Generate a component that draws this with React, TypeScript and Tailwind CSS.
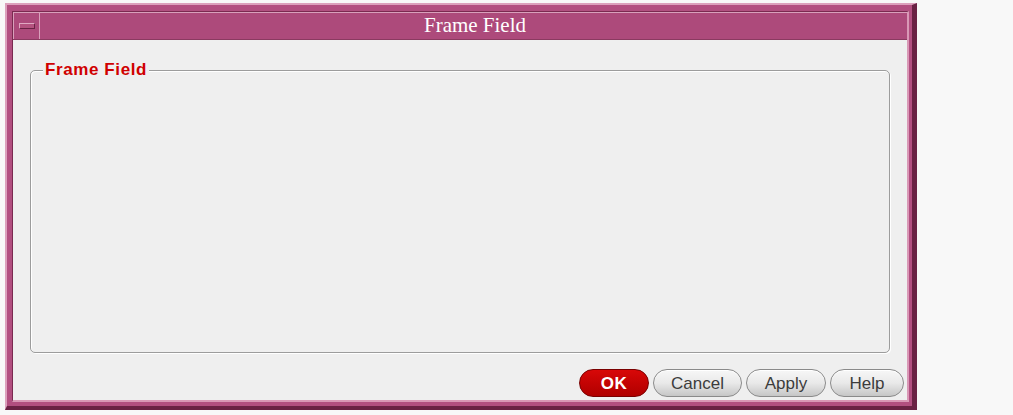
function GrayButton({ label, width }: { label: string; width: string }) {
  return (
    <button
      className={
        "h-[28px] rounded-full border border-[#8a8a8a] bg-gradient-to-b from-[#f7f7f7] via-[#e9e9e9] to-[#c6c6c6] text-[17px] leading-none text-[#3c3c3c] shadow-[inset_0_1px_0_#ffffff] " +
        width
      }
      style={{ fontFamily: '"Liberation Sans", Arial, sans-serif' }}
    >
      {label}
    </button>
  );
}

export default function App() {
  return (
    <div className="h-[415px] w-[1013px] bg-[#f8f8f8] pl-[5px] pt-[3px]">
      <div className="flex h-[407px] w-[912px] border-b-[4px] border-l-2 border-r-[5px] border-t-2 border-b-[#6a2244] border-l-[#dca0bc] border-r-[#6a2244] border-t-[#dca0bc] bg-[#b24f80] pb-[4px] pl-[5px] pr-[3px] pt-[6px]">
        <div className="flex flex-1 flex-col border-b-2 border-l border-r-2 border-t border-b-[#d998b6] border-l-[#7a2a50] border-r-[#d998b6] border-t-[#7a2a50]">
          {/* title bar */}
          <div className="flex h-[28px] border-b border-b-[#8a3a60] bg-[#ad4a7b]">
            <div className="flex w-[27px] items-center justify-center border-l border-r border-t border-l-[#d9a0bb] border-r-[#d9a0bb] border-t-[#d9a0bb]">
              <div className="h-[6px] w-[16px] border border-b-[#6a2244] border-l-[#e0a8c2] border-r-[#6a2244] border-t-[#e0a8c2] bg-[#b4527f]" />
            </div>
            <div
              className="flex flex-1 items-center justify-center border-t border-t-[#d9a0bb] pl-[3px] text-[21px] text-white"
              style={{ fontFamily: '"Liberation Serif", "Times New Roman", serif' }}
            >
              Frame Field
            </div>
          </div>
          {/* content */}
          <div className="flex flex-1 flex-col bg-[#efefef]">
            <div className="px-[17px] pt-[30px]">
              <div className="relative h-[283px] rounded-[5px] border border-[#9c9c9c] shadow-[inset_1px_1px_0_#ffffff,1px_1px_0_#ffffff]">
                <span
                  className="absolute left-[12px] top-[-10px] bg-[#efefef] px-[2px] text-[17px] font-bold leading-[18px] tracking-[0.6px] text-[#d00000]"
                  style={{ fontFamily: '"Liberation Sans", Arial, sans-serif' }}
                >
                  Frame Field
                </span>
              </div>
            </div>
            <div className="mt-[16px] flex justify-end gap-[4px] pr-[3px]">
              <button
                className="h-[28px] w-[70px] rounded-full border border-[#7a0000] bg-gradient-to-b from-[#d80808] to-[#b00000] text-[17px] font-bold leading-none tracking-[0.5px] text-white"
                style={{ fontFamily: '"Liberation Sans", Arial, sans-serif' }}
              >
                OK
              </button>
              <GrayButton label="Cancel" width="w-[89px]" />
              <GrayButton label="Apply" width="w-[80px]" />
              <GrayButton label="Help" width="w-[74px]" />
            </div>
          </div>
        </div>
      </div>
    </div>
  );
}
